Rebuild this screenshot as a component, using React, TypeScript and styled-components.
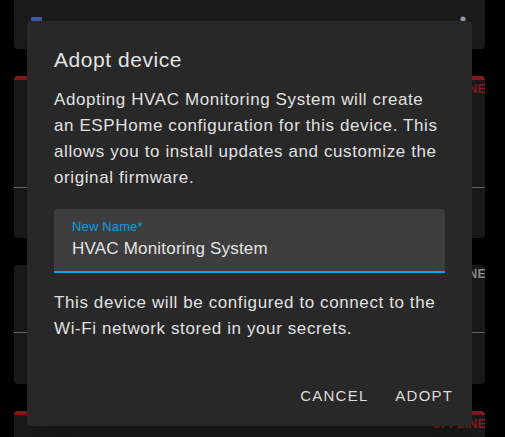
import React from "react";
import styled, { createGlobalStyle } from "styled-components";

const Global = createGlobalStyle`
  html, body { margin: 0; padding: 0; background: #000; }
  body { font-family: "Liberation Sans", Arial, sans-serif; }
  #root { position: relative; width: 505px; height: 437px; overflow: hidden; }
`;

const Page = styled.div`
  display: flex;
  flex-direction: column;
  gap: 27px;
  padding: 0 20px 0 14px;
  height: 437px;
  box-sizing: border-box;
`;

const TopEdge = styled.div`
  height: 1px;
  background: #9c9c9c;
  margin-bottom: -27px;
`;

const Card = styled.div<{ $status?: "offline" | "online" | "none"; $h: number }>`
  flex: 0 0 ${(p) => p.$h}px;
  background: #1b1b1b;
  border-radius: ${(p) => (p.$status === "none" ? "0 0 4px 4px" : "4px")};
  border-top: ${(p) => (p.$status === "offline" ? "4px solid #8c1b1b" : "0")};
  box-sizing: border-box;
  display: flex;
  flex-direction: column;
  overflow: hidden;
`;

const CardHead = styled.div`
  display: flex;
  justify-content: space-between;
  align-items: flex-start;
  padding: 17px 19px 0 17px;
`;

const IconTop = styled.div`
  width: 11px;
  height: 10px;
  background: #3d55a8;
  border-radius: 1px;
`;

const Badge = styled.div<{ $offline: boolean }>`
  align-self: flex-end;
  padding-top: 4px;
  font-size: 12.5px;
  font-weight: 700;
  line-height: 10px;
  color: ${(p) => (p.$offline ? "#8c1c1c" : "#8f8f8f")};
  letter-spacing: 0.2px;
  margin-right: -1px;
`;

const CardBody = styled.div`
  flex: 1;
  display: flex;
  flex-direction: column;
`;

const CardActions = styled.div<{ $h: number }>`
  flex: 0 0 ${(p) => p.$h}px;
  border-top: 1px solid #6a6a6a;
`;

const Dialog = styled.div`
  position: absolute;
  left: 27px;
  top: 21px;
  width: 445px;
  height: 405px;
  background: #282828;
  border-radius: 4px;
  box-shadow: 0 11px 15px -7px rgba(0, 0, 0, 0.2), 0 24px 38px 3px rgba(0, 0, 0, 0.14);
  display: flex;
  flex-direction: column;
  box-sizing: border-box;
  color: #e1e1e1;
`;

const Title = styled.h2`
  margin: 0;
  padding: 23px 27px 0;
  font-size: 21px;
  font-weight: 400;
  line-height: 32px;
  letter-spacing: 0.55px;
  color: #e3e3e3;
`;

const Content = styled.div`
  padding: 11px 27px 0;
  display: flex;
  flex-direction: column;
`;

const Para = styled.p`
  margin: 0;
  font-size: 17px;
  line-height: 26px;
  letter-spacing: 0.6px;
  color: #e0e0e0;
`;

const Field = styled.div`
  margin: 18px 0 17px;
  height: 64px;
  background: #3d3d3d;
  border-radius: 4px 4px 0 0;
  border-bottom: 2px solid #08a4ec;
  box-sizing: border-box;
  padding: 0 18px;
  display: flex;
  flex-direction: column;
`;

const Label = styled.label`
  font-size: 13px;
  line-height: 13px;
  margin-top: 11px;
  color: #0a9fe0;
  letter-spacing: 0.15px;
`;

const Value = styled.div`
  font-size: 17px;
  line-height: 20px;
  margin-top: 6px;
  letter-spacing: 0.2px;
  color: #e3e3e3;
`;

const Actions = styled.div`
  margin-top: auto;
  display: flex;
  justify-content: flex-end;
  gap: 12px;
  padding: 0 12px 11px 0;
`;

const Button = styled.button`
  background: none;
  border: 0;
  height: 39px;
  padding: 0 8px;
  font-family: "Liberation Sans", Arial, sans-serif;
  font-size: 15px;
  letter-spacing: 1.25px;
  color: #dcdcdc;
  text-transform: uppercase;
  cursor: pointer;
  margin-right: -1.25px;
`;

function MoreDots() {
  return (
    <svg width="6" height="20" viewBox="0 0 6 20" style={{ display: "block", marginTop: -2 }}>
      <circle cx="3" cy="4" r="2.6" fill="#8c9bb0" />
      <circle cx="3" cy="11" r="2.6" fill="#8c9bb0" />
      <circle cx="3" cy="18" r="2.6" fill="#8c9bb0" />
    </svg>
  );
}

export default function App() {
  return (
    <>
      <Global />
      <Page>
        <TopEdge />
        <Card $status="none" $h={49}>
          <CardHead>
            <IconTop />
            <MoreDots />
          </CardHead>
        </Card>
        <Card $status="offline" $h={162}>
          <CardBody>
            <Badge $offline>OFFLINE</Badge>
          </CardBody>
          <CardActions $h={50} />
        </Card>
        <Card $status="online" $h={119}>
          <CardBody>
            <Badge $offline={false}>ONLINE</Badge>
          </CardBody>
          <CardActions $h={51} />
        </Card>
        <Card $status="offline" $h={60}>
          <CardBody>
            <Badge $offline>OFFLINE</Badge>
          </CardBody>
        </Card>
      </Page>
      <Dialog role="dialog" aria-labelledby="adopt-title">
        <Title id="adopt-title">Adopt device</Title>
        <Content>
          <Para>
            Adopting HVAC Monitoring System will create an ESPHome configuration for this device. This allows you to
            install updates and customize the original firmware.
          </Para>
          <Field>
            <Label>New Name*</Label>
            <Value>HVAC Monitoring System</Value>
          </Field>
          <Para>This device will be configured to connect to the Wi-Fi network stored in your secrets.</Para>
        </Content>
        <Actions>
          <Button>Cancel</Button>
          <Button>Adopt</Button>
        </Actions>
      </Dialog>
    </>
  );
}
